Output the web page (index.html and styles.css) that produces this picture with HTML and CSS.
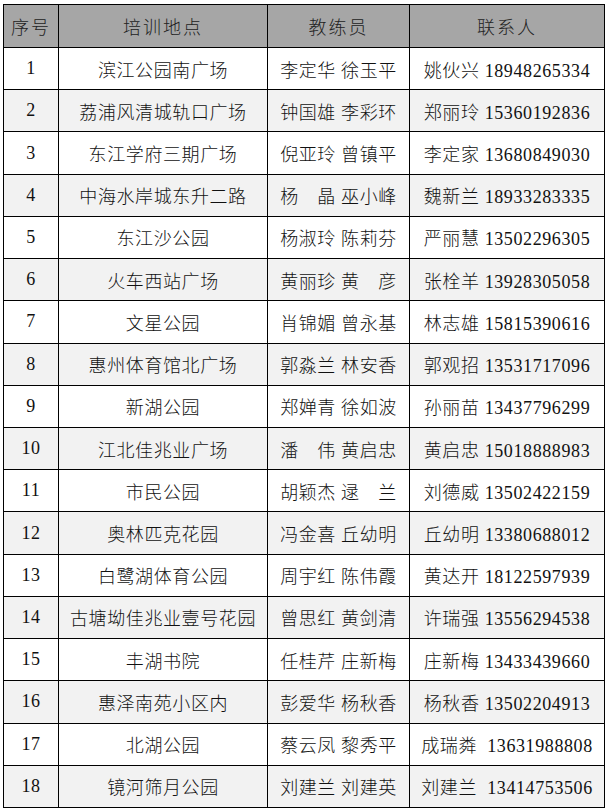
FILE: index.html
```html
<!DOCTYPE html>
<html lang="zh-CN">
<head>
<meta charset="utf-8">
<title>培训地点</title>
<link rel="stylesheet" href="styles.css">
</head>
<body>
<table class="sheet">
  <colgroup>
    <col class="c-no">
    <col class="c-place">
    <col class="c-coach">
    <col class="c-contact">
  </colgroup>
  <thead>
    <tr class="head"><th>序号</th><th>培训地点</th><th>教练员</th><th>联系人</th></tr>
  </thead>
  <tbody>
    <tr><td>1</td><td>滨江公园南广场</td><td>李定华 徐玉平</td><td>姚伙兴 18948265334</td></tr>
    <tr><td>2</td><td>荔浦风清城轨口广场</td><td>钟国雄 李彩环</td><td>郑丽玲 15360192836</td></tr>
    <tr><td>3</td><td>东江学府三期广场</td><td>倪亚玲 曾镇平</td><td>李定家 13680849030</td></tr>
    <tr><td>4</td><td>中海水岸城东升二路</td><td>杨　晶 巫小峰</td><td>魏新兰 18933283335</td></tr>
    <tr><td>5</td><td>东江沙公园</td><td>杨淑玲 陈莉芬</td><td>严丽慧 13502296305</td></tr>
    <tr><td>6</td><td>火车西站广场</td><td>黄丽珍 黄　彦</td><td>张栓羊 13928305058</td></tr>
    <tr><td>7</td><td>文星公园</td><td>肖锦媚 曾永基</td><td>林志雄 15815390616</td></tr>
    <tr><td>8</td><td>惠州体育馆北广场</td><td>郭淼兰 林安香</td><td>郭观招 13531717096</td></tr>
    <tr><td>9</td><td>新湖公园</td><td>郑婵青 徐如波</td><td>孙丽苗 13437796299</td></tr>
    <tr><td>10</td><td>江北佳兆业广场</td><td>潘　伟 黄启忠</td><td>黄启忠 15018888983</td></tr>
    <tr><td>11</td><td>市民公园</td><td>胡颖杰 逯　兰</td><td>刘德威 13502422159</td></tr>
    <tr><td>12</td><td>奥林匹克花园</td><td>冯金喜 丘幼明</td><td>丘幼明 13380688012</td></tr>
    <tr><td>13</td><td>白鹭湖体育公园</td><td>周宇红 陈伟霞</td><td>黄达开 18122597939</td></tr>
    <tr><td>14</td><td>古塘坳佳兆业壹号花园</td><td>曾思红 黄剑清</td><td>许瑞强 13556294538</td></tr>
    <tr><td>15</td><td>丰湖书院</td><td>任桂芹 庄新梅</td><td>庄新梅 13433439660</td></tr>
    <tr><td>16</td><td>惠泽南苑小区内</td><td>彭爱华 杨秋香</td><td>杨秋香 13502204913</td></tr>
    <tr><td>17</td><td>北湖公园</td><td>蔡云凤 黎秀平</td><td>成瑞粦  13631988808</td></tr>
    <tr><td>18</td><td>镜河筛月公园</td><td>刘建兰 刘建英</td><td>刘建兰  13414753506</td></tr>
  </tbody>
</table>
</body>
</html>
```
FILE: styles.css
```css
html, body {
  margin: 0;
  padding: 0;
  background: #ffffff;
}

body {
  padding: 4px 0 0 3px;
}

.sheet {
  border-collapse: collapse;
  table-layout: fixed;
  width: 601px;
  font-family: "Liberation Serif", "Noto Sans CJK SC", serif;
  font-size: 18px;
  font-weight: 300;
  color: #111111;
  letter-spacing: 0.6px;
}

.c-no { width: 55px; }
.c-place { width: 209px; }
.c-coach { width: 142px; }
.c-contact { width: 195px; }

.sheet th,
.sheet td {
  border: 1px solid #000000;
  padding: 0;
  text-align: center;
  vertical-align: middle;
  white-space: pre;
  font-weight: 300;
}

.head {
  height: 43px;
  background: #a6a6a6;
}

.head th {
  letter-spacing: 2px;
  color: #222222;
}

.sheet tbody tr {
  height: 42.22px;
}

.sheet tbody tr:nth-child(even) {
  background: #f2f2f2;
}
```
